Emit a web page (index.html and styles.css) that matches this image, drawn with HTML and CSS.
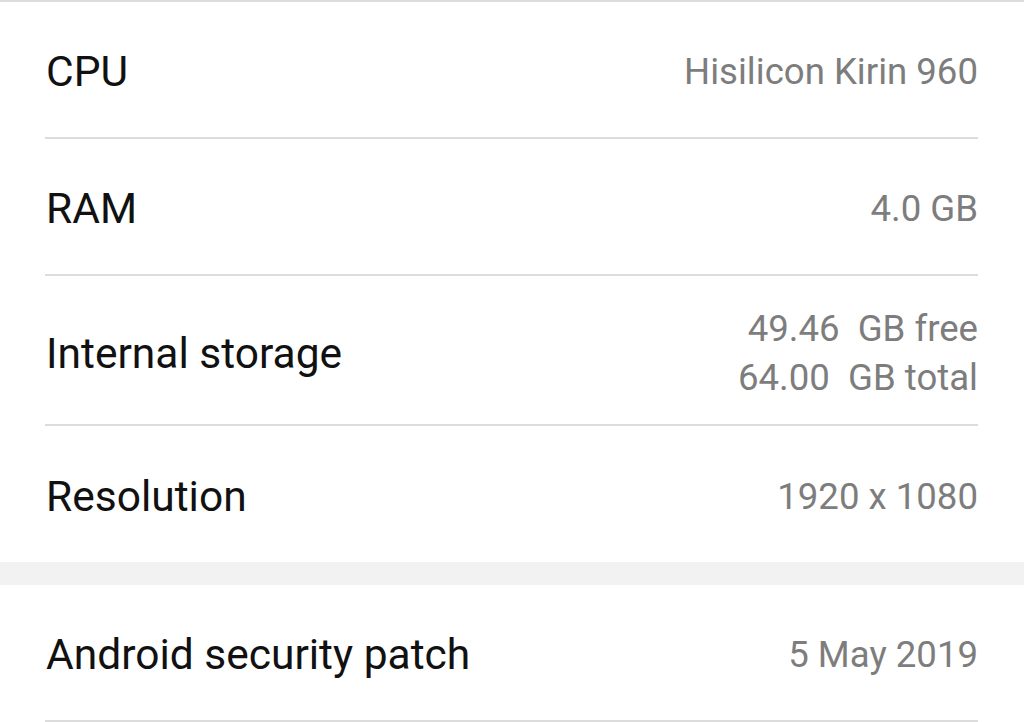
FILE: index.html
```html
<!DOCTYPE html>
<html lang="en">
<head>
  <meta charset="UTF-8" />
  <meta name="viewport" content="width=device-width, initial-scale=1" />
  <title>About phone</title>
  <link rel="stylesheet" href="styles.css">
</head>
<body>
  <div class="group">
    <div class="row">
      <span class="label">CPU</span>
      <span class="value">Hisilicon Kirin 960</span>
    </div>
    <div class="row">
      <span class="label">RAM</span>
      <span class="value">4.0 GB</span>
    </div>
    <div class="row tall">
      <span class="label">Internal storage</span>
      <span class="value multi">49.46  GB free
64.00  GB total</span>
    </div>
    <div class="row last">
      <span class="label">Resolution</span>
      <span class="value">1920 x 1080</span>
    </div>
  </div>

  <div class="spacer"></div>

  <div class="group">
    <div class="row">
      <span class="label">Android security patch</span>
      <span class="value">5 May 2019</span>
    </div>
  </div>
</body>
</html>
```

FILE: styles.css
```css
body {
  margin: 0;
  background: #fff;
  font-family: Roboto, "Noto Sans", sans-serif;
  overflow: hidden;
}
.group {
  padding: 0 46px 0 45px;
  border-top: 2px solid #dcdcdc;
}
.row {
  display: flex;
  align-items: center;
  justify-content: space-between;
  height: 131px;
  padding-top: 4px;
  border-bottom: 2px solid #dcdcdc;
}
.row.tall {
  height: 142px;
  padding-top: 6px;
}
.row.last {
  border-bottom: none;
  height: 132px;
}
.label {
  font-size: 42.5px;
  color: #111;
  padding-left: 1px;
}
.value {
  font-size: 36.6px;
  color: #7d7d7d;
  text-align: right;
}
.value.multi {
  white-space: pre;
  line-height: 49px;
}
.spacer {
  height: 23px;
  background: #f2f2f2;
}
.group + .spacer + .group {
  border-top: none;
}
```
